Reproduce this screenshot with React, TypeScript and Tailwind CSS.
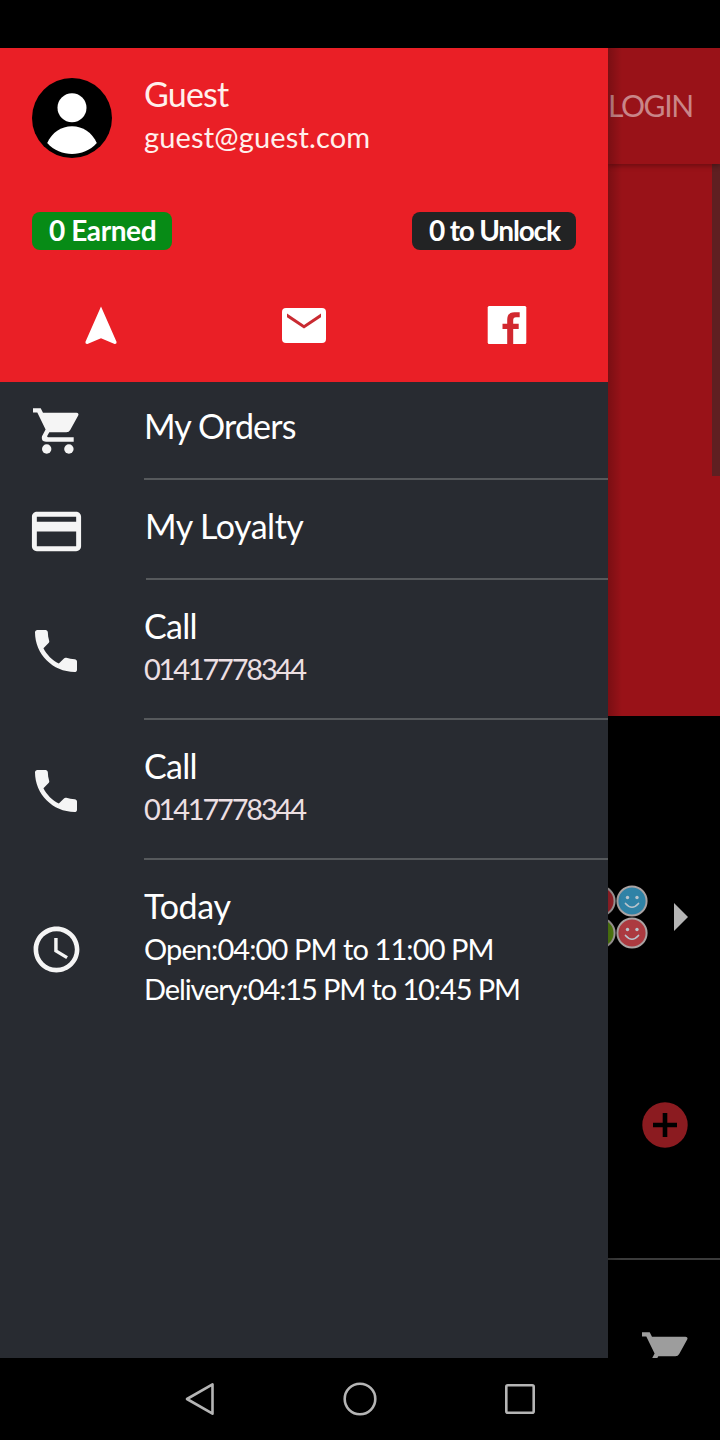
import type { ReactNode } from 'react';
import clsx from 'clsx';
import { MdAccessTime, MdPayment, MdPhone } from 'react-icons/md';

type MenuItem = {
  title: string;
  titleClass: string;
  icon: ReactNode;
  lines?: { text: string; className: string }[];
  rowClass: string;
  dividerClass?: string;
};

function CartIcon({ className }: { className: string }) {
  return (
    <svg className={className} viewBox="0 0 48 48" fill="currentColor">
      <path
        fillRule="evenodd"
        d="M1 1.300H8.700L11 5.700H44.500Q47.300 6 46.200 8.600L38.200 23Q37 25.200 34.300 25.200H17.300L15.200 29.100Q14.900 30.200 16 30.300H41.700V34.800H14Q8.600 34.300 10 29.300L13.600 22.500 5.300 5.500H1Z"
      />
      <circle cx="14.700" cy="42" r="4.700" />
      <circle cx="36.900" cy="42" r="4.700" />
    </svg>
  );
}

const items: MenuItem[] = [
  {
    title: 'My Orders',
    titleClass: 'tracking-[-0.85px]',
    icon: <CartIcon className="ml-8 mt-[27px] size-12" />,
    rowClass: 'h-[98px] pt-6',
    dividerClass: 'ml-36',
  },
  {
    title: 'My Loyalty',
    titleClass: 'tracking-[-0.5px] ml-px',
    icon: <MdPayment className="ml-[27px] mt-[21.5px] size-[59px]" />,
    rowClass: 'h-[100px] pt-[26px]',
    dividerClass: 'ml-[146px]',
  },
  {
    title: 'Call',
    titleClass: 'tracking-[-0.7px]',
    icon: <MdPhone className="ml-7 mt-[43px] size-14" />,
    lines: [{ text: '01417778344', className: 'text-[#ecdfe2] tracking-[-2.2px]' }],
    rowClass: 'h-[140px] pt-[26px]',
    dividerClass: 'ml-36',
  },
  {
    title: 'Call',
    titleClass: 'tracking-[-0.7px]',
    icon: <MdPhone className="ml-7 mt-[43px] size-14" />,
    lines: [{ text: '01417778344', className: 'text-[#ecdfe2] tracking-[-2.2px]' }],
    rowClass: 'h-[140px] pt-[26px]',
    dividerClass: 'ml-36',
  },
  {
    title: 'Today',
    titleClass: 'tracking-[-0.3px]',
    icon: <MdAccessTime className="ml-[28.5px] mt-[61.5px] size-[55px]" />,
    lines: [
      { text: 'Open:04:00 PM to 11:00 PM', className: 'tracking-[-0.9px]' },
      { text: 'Delivery:04:15 PM to 10:45 PM', className: 'tracking-[-1.1px]' },
    ],
    rowClass: 'h-[200px] pt-[26px]',
  },
];

function MenuRow({ item }: { item: MenuItem }) {
  return (
    <div>
      <div className={clsx('flex', item.rowClass)}>
        <div className="-mt-[26px] w-36 shrink-0 text-[#f5f5f5]">{item.icon}</div>
        <div className="whitespace-nowrap">
          <p className={clsx('text-[34px] leading-10', item.titleClass)}>{item.title}</p>
          {item.lines && (
            <div className="mt-[3px]">
              {item.lines.map((line) => (
                <p key={line.text} className={clsx('text-[29px] leading-10', line.className)}>
                  {line.text}
                </p>
              ))}
            </div>
          )}
        </div>
      </div>
      {item.dividerClass && <div className={clsx('-mt-0.5 h-0.5 bg-[#56595c]', item.dividerClass)} />}
    </div>
  );
}

function Avatar() {
  return (
    <svg className="size-20" viewBox="0 0 80 80">
      <circle cx="40" cy="40" r="40" fill="#000" />
      <circle cx="40" cy="29.7" r="14.5" fill="#fff" />
      <path d="M15.2 65C20 54.5 29 48.2 40 48.2S60 54.5 64.8 65C58 72.5 49 76 40 76S22 72.5 15.2 65Z" fill="#fff" />
    </svg>
  );
}

function DrawerHeader() {
  return (
    <header className="h-[334px] bg-[#ea1f26] pt-[30px]">
      <div className="flex h-[134px] gap-8 pl-8">
        <Avatar />
        <div className="whitespace-nowrap text-[#fff0ec]">
          <p className="-mt-1 text-[34px] leading-10 tracking-[-0.8px]">Guest</p>
          <p className="mt-[3px] text-[29px] leading-10 tracking-[0.15px]">guest@guest.com</p>
        </div>
      </div>
      <div className="flex h-[38px] justify-between px-8 text-[28px] font-bold leading-[36px]">
        <span className="w-[140px] whitespace-nowrap rounded-lg bg-[#078b16] pl-[17px] tracking-[-0.4px]">0 Earned</span>
        <span className="w-[164px] whitespace-nowrap rounded-lg bg-[#222324] pl-[17px] tracking-[-1.2px]">0 to Unlock</span>
      </div>
      <div className="mt-[52px] grid grid-cols-3 justify-items-center">
        <svg className="size-12" viewBox="0 0 48 48" fill="#fff">
          <path d="M24 4.500 39.600 40Q39.800 42.200 37.600 42L24 36.300 10.400 42Q8.200 42.200 8.400 40Z" />
        </svg>
        <svg className="size-12" viewBox="0 0 48 48">
          <rect x="2" y="6" width="44" height="35" rx="4" fill="#fff" />
          <path d="M7 11.600V15.200L24 26.600 41 15.200V11.600L24 23Z" fill="#c92a31" />
        </svg>
        <svg className="size-12" viewBox="0 0 48 48">
          <rect x="4.700" y="4" width="38.600" height="38" rx="1.500" fill="#fff" />
          <path d="M24.200 42V27H19.500V21.700H24.200V18Q24.200 10.200 31.500 10.200H36.700V15.300H33Q30.200 15.300 30.200 18.200V21.700H35.700V27H30.200V42Z" fill="#d2282f" />
        </svg>
      </div>
    </header>
  );
}

function Smiley({ className }: { className: string }) {
  return (
    <svg className={clsx('size-8 shrink-0', className)} viewBox="0 0 32 32">
      <circle cx="16" cy="16" r="14.600" fill="currentColor" stroke="#aaa3a3" strokeWidth="2" />
      <circle cx="11.500" cy="12.500" r="1.700" fill="#b9c4cc" />
      <circle cx="21" cy="12.500" r="1.700" fill="#b9c4cc" />
      <path d="M9.500 18.500Q16 26 22.500 18.500" fill="none" stroke="#b9c4cc" strokeWidth="1.700" strokeLinecap="round" />
    </svg>
  );
}

// The strip of the menu page that stays visible beside the open drawer
function PageBehind() {
  return (
    <main className="relative flex w-28 shrink-0 flex-col overflow-hidden bg-black">
      <div className="z-10 h-[116px] shrink-0 bg-[#991218] pt-[37px] text-[30px] leading-10 tracking-[-1.4px] text-[#c98588] shadow-[0_2px_5px_rgba(0,0,0,0.3)]">
        LOGIN
      </div>
      <div className="flex h-[552px] shrink-0 justify-end bg-[#991218]">
        <div className="h-[312px] w-2 bg-[#5f1f21]" />
      </div>
      <div className="mt-[169px] flex h-16 shrink-0 items-center">
        <div className="-ml-6 grid w-16 shrink-0 grid-cols-2">
          <Smiley className="text-[#a3232b]" />
          <Smiley className="text-[#2f82a6]" />
          <Smiley className="text-[#568410]" />
          <Smiley className="text-[#ac3a40]" />
        </div>
        <svg className="ml-[26px] h-7 w-3.5" viewBox="0 0 14 28" fill="#b5b5b5">
          <path d="M0 0 14 14 0 28Z" />
        </svg>
      </div>
      <svg className="ml-[34px] mt-[153px] size-[46px] shrink-0" viewBox="0 0 46 46">
        <circle cx="23" cy="23" r="22.700" fill="#8b1b20" />
        <path d="M23 11V35M11 23H35" stroke="#000" strokeWidth="4.600" />
      </svg>
      <div className="mt-[110px] h-0.5 shrink-0 bg-[#3b3b3b]" />
      <CartIcon className="ml-[33px] mt-[71px] size-12 shrink-0 text-[#9d9d9d]" />
      <div className="absolute left-0 top-0 z-20 h-full w-3.5 bg-linear-to-r from-black/20 to-transparent" />
    </main>
  );
}

function SystemNav() {
  return (
    <nav className="flex h-[82px] items-center justify-center gap-28 bg-black">
      <svg className="size-12" viewBox="0 0 48 48" fill="none" stroke="#b5b5b5" strokeWidth="2.600" strokeLinejoin="round">
        <path d="M11 24 36.500 9.300V38.700Z" />
      </svg>
      <svg className="size-12" viewBox="0 0 48 48" fill="none" stroke="#b5b5b5" strokeWidth="2.600">
        <circle cx="24" cy="24" r="15.300" />
      </svg>
      <svg className="size-12" viewBox="0 0 48 48" fill="none" stroke="#b5b5b5" strokeWidth="2.600">
        <rect x="10.300" y="10.300" width="27.400" height="27.400" rx="1.500" />
      </svg>
    </nav>
  );
}

export default function App() {
  return (
    <div className="flex h-[1440px] w-[720px] flex-col overflow-hidden bg-black font-['Lato',sans-serif] text-white">
      <div className="h-12 shrink-0" />
      <div className="flex h-[1310px] shrink-0">
        <aside className="w-[608px] shrink-0 overflow-hidden bg-[#282b31]">
          <DrawerHeader />
          {items.map((item, i) => (
            <MenuRow key={i} item={item} />
          ))}
        </aside>
        <PageBehind />
      </div>
      <SystemNav />
    </div>
  );
}
